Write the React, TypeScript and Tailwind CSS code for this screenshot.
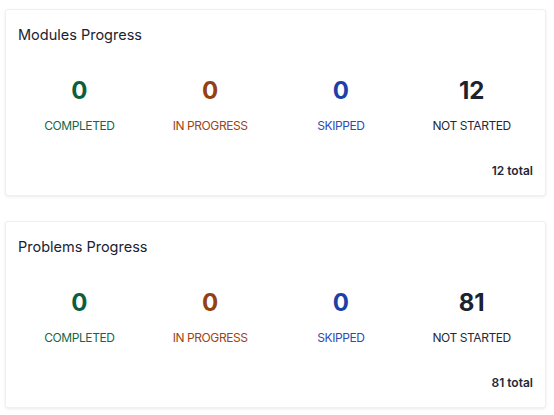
import React from 'react'

type Stat = {
    label: string
    value: number
    numClass: string
    labelClass: string
}

interface ProgressCardProps {
    title: string
    counts: number[]
    total: number
}

function ProgressCard({ title, counts, total }: ProgressCardProps) {
    const stats: Stat[] = [
        { label: 'Completed', value: counts[0], numClass: 'text-[#0b5f41]', labelClass: 'text-[#11694a]' },
        { label: 'In Progress', value: counts[1], numClass: 'text-[#95400f]', labelClass: 'text-[#9a4515]' },
        { label: 'Skipped', value: counts[2], numClass: 'text-[#1c3fa8]', labelClass: 'text-[#2a4db5]' },
        { label: 'Not Started', value: counts[3], numClass: 'text-[#1b2331]', labelClass: 'text-[#1f2937]' },
    ]

    return (
        <div className="w-[541px] bg-white border border-[#f0f0f0] shadow-[0_1px_3px_rgba(0,0,0,0.08)] rounded-[3px] pt-[14px] pb-[16px] px-[12px]">
            <h2 className="text-[14.5px] leading-[22px] font-normal text-[#1b2331]">{title}</h2>

            {/* Stats */}
            <div className="grid grid-cols-4 gap-2 mt-[29px]">
                {stats.map(s => (
                    <div key={s.label} className="flex flex-col items-center">
                        <span className={`text-[24px] leading-[32px] font-bold ${s.numClass}`}>{s.value}</span>
                        <span className={`mt-[10px] text-[12px] leading-[18px] font-normal tracking-[-0.035em] uppercase ${s.labelClass}`}>{s.label}</span>
                    </div>
                ))}
            </div>

            <div className="mt-[28px] text-right text-[12px] leading-[16px] font-semibold text-[#1f2937]">
                {total} total
            </div>
        </div>
    )
}

export default function App() {
    return (
        <div className="min-h-screen bg-white pt-[9px] pl-[5px] flex flex-col gap-[25px] font-['Inter',sans-serif]">
            <ProgressCard title="Modules Progress" counts={[0, 0, 0, 12]} total={12} />
            <ProgressCard title="Problems Progress" counts={[0, 0, 0, 81]} total={81} />
        </div>
    )
}
